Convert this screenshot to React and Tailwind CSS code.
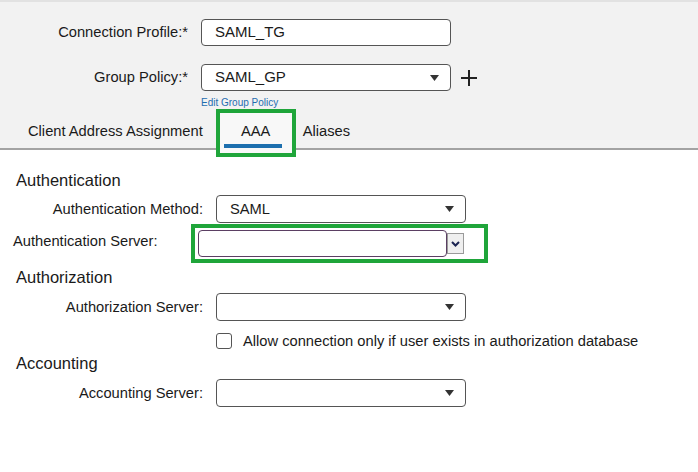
import React from 'react'

const font = {fontFamily: '"Liberation Sans", Arial, sans-serif'}

const Caret = () => (
  <svg width="9" height="6" viewBox="0 0 9 6">
    <path d="M0 0h9L4.5 6z" fill="#333" />
  </svg>
)

function Select({value}) {
  return (
    <div className="flex items-center justify-between w-[250px] h-[28px] border border-[#555] rounded-[4px] bg-white pl-[13px] pr-[11px] text-[14.7px] text-[#1a1a1a]">
      <span>{value}</span>
      <Caret />
    </div>
  )
}

function Row({label, children, labelWidth = 'w-[203px]', gap = 'ml-[13px]'}) {
  return (
    <div className="flex items-center">
      <div className={`${labelWidth} text-right text-[14.7px] text-[#1a1a1a]`}>{label}</div>
      <div className={gap}>{children}</div>
    </div>
  )
}

export default function App() {
  return (
    <div className="w-[698px] h-[472px] bg-white overflow-hidden" style={font}>
      <div className="bg-[#f2f2f2] border-t-2 border-[#e2e2e2] pt-[17px]">
        <Row label="Connection Profile:*" labelWidth="w-[188px]">
          <div className="flex items-center w-[250px] h-[27px] border border-[#555] rounded-[4px] bg-white pl-[13px] text-[15px] text-[#1a1a1a]">
            SAML_TG
          </div>
        </Row>
        <div className="mt-[18px]">
          <Row label="Group Policy:*" labelWidth="w-[188px]">
            <div className="flex items-center">
              <div className="flex items-center justify-between w-[250px] h-[27px] border border-[#555] rounded-[4px] bg-white pl-[13px] pr-[11px] text-[15px] text-[#1a1a1a]">
                <span>SAML_GP</span>
                <Caret />
              </div>
              <svg className="ml-[10px]" width="16" height="16" viewBox="0 0 16 16">
                <path d="M8 0v16M0 8h16" stroke="#222" strokeWidth="2" />
              </svg>
            </div>
          </Row>
        </div>
        <div className="mt-[6px] pl-[201px] text-[10px] leading-[12px] text-[#1f6db0]">Edit Group Policy</div>
        <div className="flex h-[41px] border-b-2 border-[#a3a3a3] text-[14.7px] text-[#1a1a1a]">
          <div className="pl-[28px] pt-[12px] leading-[20px]">Client Address Assignment</div>
          <div className="relative ml-[17px] w-[72px]">
            <div className="absolute -left-[4px] top-0 w-[80px] h-[48px] border-4 border-[#1fa53a] bg-[#f8f8f8]">
              <div className="pt-[8px] leading-[20px] text-center">AAA</div>
              <div className="mt-[3px] ml-[4px] w-[58px] h-[4px] bg-[#1d6fae]" />
            </div>
          </div>
          <div className="ml-[11px] pt-[12px] leading-[20px]">Aliases</div>
        </div>
      </div>

      <div className="pt-[20px] text-[#1a1a1a]">
        <div className="pl-[16px] text-[16.5px] leading-[20px]">Authentication</div>
        <div className="mt-[5px]">
          <Row label="Authentication Method:">
            <Select value="SAML" />
          </Row>
        </div>
        <div className="mt-[1px] flex items-center">
          <div className="w-[191px] pl-[13px] pb-[4px] text-[14.7px]">Authentication Server:</div>
          <div className="flex items-center w-[297px] h-[39px] border-4 border-[#1fa53a] bg-white pl-[3px]">
            <div className="w-[249px] h-[27px] border border-[#5b3f63] rounded-[4px] bg-white" />
            <div className="flex items-center justify-center w-[17px] h-[21px] border border-[#9a9a9a] bg-[#efefef]">
              <svg width="9" height="6" viewBox="0 0 9 6">
                <path d="M1 1l3.5 3.5L8 1" stroke="#1b2452" strokeWidth="2" fill="none" />
              </svg>
            </div>
          </div>
        </div>

        <div className="mt-[4px] pl-[16px] text-[16.5px] leading-[20px]">Authorization</div>
        <div className="mt-[6px]">
          <Row label="Authorization Server:">
            <Select value="" />
          </Row>
        </div>
        <div className="mt-[12px] flex items-center pl-[216px]">
          <div className="w-[16px] h-[16px] border border-[#555] rounded-[3px] bg-white" />
          <span className="ml-[11px] text-[14.7px] leading-[16px]">Allow connection only if user exists in authorization database</span>
        </div>

        <div className="mt-[4px] pl-[16px] text-[16.5px] leading-[20px]">Accounting</div>
        <div className="mt-[6px]">
          <Row label="Accounting Server:">
            <Select value="" />
          </Row>
        </div>
      </div>
    </div>
  )
}
